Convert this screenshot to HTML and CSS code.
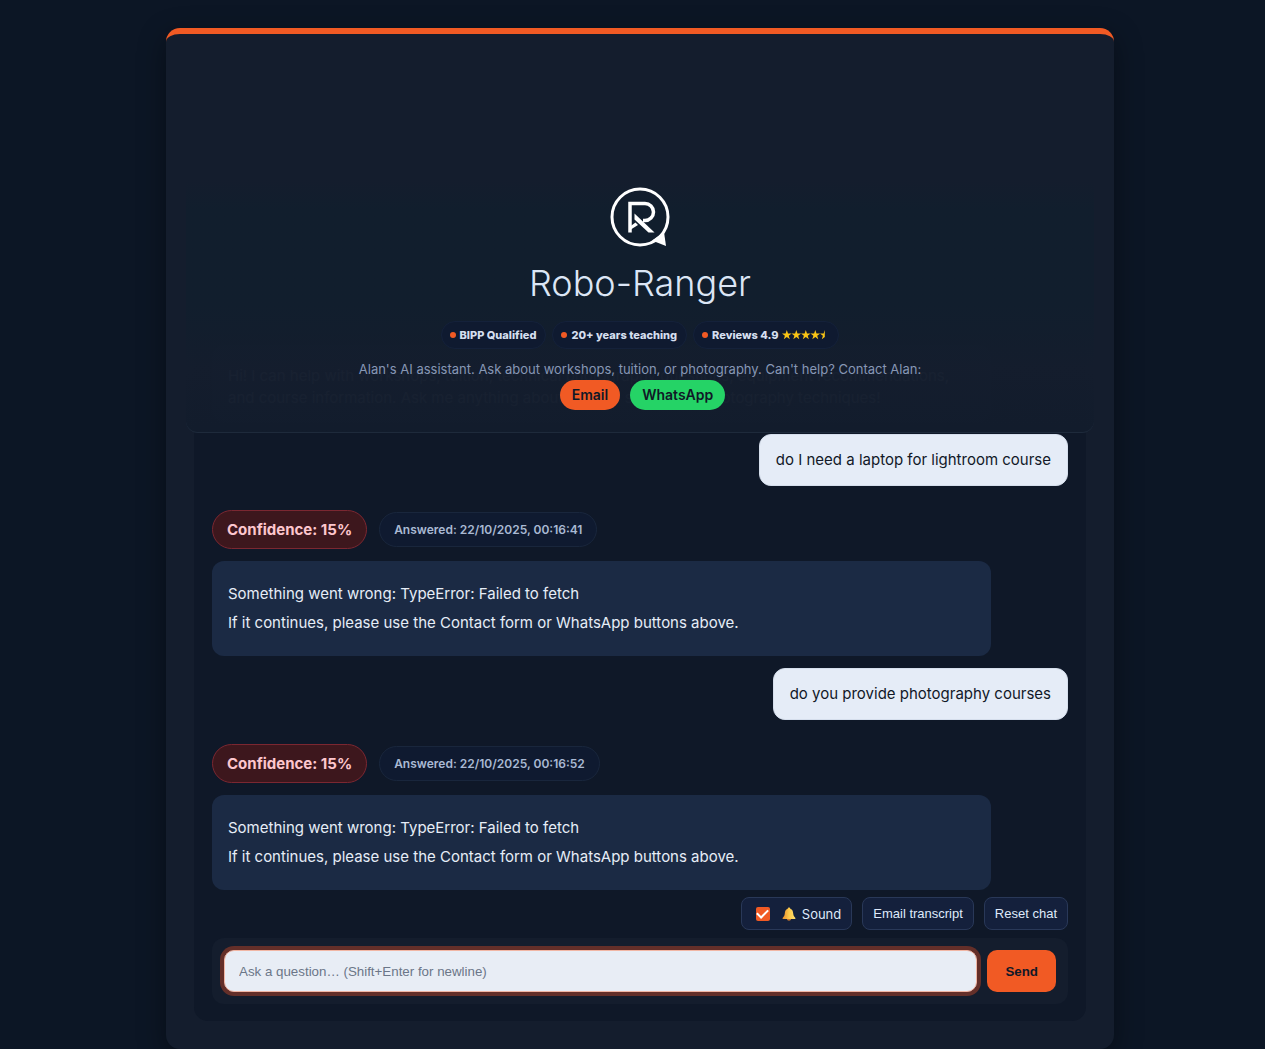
FILE: index.html
```html
<!DOCTYPE html>
<html lang="en">
<head>
<meta charset="utf-8">
<meta name="viewport" content="width=device-width, initial-scale=1">
<title>Robo-Ranger</title>
<link rel="stylesheet" href="styles.css">
</head>
<body>
<main class="card">
  <header class="hero">
    <svg class="logo" viewBox="0 0 60 60" aria-hidden="true">
      <circle cx="30" cy="30" r="28" fill="none" stroke="#fff" stroke-width="3"/>
      <path d="M42 53.500 L54 45 L56 59 Z" fill="#fff"/>
      <path d="M20 45.500V16.500H35a8.500 8.500 0 0 1 0 17H33" fill="none" stroke="#fff" stroke-width="3.500"/>
      <path d="M24.500 26.500L44.500 45.500H38.500L24.500 32.500Z" fill="#fff"/>
      <path d="M20 39.500L25.500 35.500L28 38L20 43Z" fill="#fff"/>
    </svg>
    <h1 class="title">Robo-Ranger</h1>
    <ul class="badges">
      <li class="badge">BIPP Qualified</li>
      <li class="badge">20+ years teaching</li>
      <li class="badge">Reviews 4.9
        <svg class="stars" viewBox="0 0 43 10" role="img" aria-label="Four and a half stars">
          <defs><path id="star" d="M4.800 0L6 3.500H9.600L6.700 5.700L7.800 9.200L4.800 7.100L1.800 9.200L2.900 5.700L0 3.500H3.600Z"/></defs>
          <g fill="#fac515">
            <use href="#star"/>
            <use href="#star" x="9.500"/>
            <use href="#star" x="19"/>
            <use href="#star" x="28.500"/>
            <path d="M42.800 0V7.100L39.800 9.200L40.900 5.700L38 3.500H41.600Z"/>
          </g>
        </svg>
      </li>
    </ul>
    <p class="intro">Alan's AI assistant. Ask about workshops, tuition, or photography. Can't help? Contact Alan:</p>
    <nav class="contacts">
      <a class="contact email" href="#email">Email</a>
      <a class="contact whatsapp" href="#whatsapp">WhatsApp</a>
    </nav>
  </header>

  <section class="chat">
    <div class="log">
      <p class="bot greeting">Hi! I can help with workshops, tuition, technical photography questions, equipment recommendations, and course information. Ask me anything about camera settings or photography techniques!</p>
      <p class="user">do I need a laptop for lightroom course</p>
      <div class="meta"><span class="confidence">Confidence: 15%</span><span class="answered">Answered: 22/10/2025, 00:16:41</span></div>
      <div class="bot"><p>Something went wrong: TypeError: Failed to fetch</p><p>If it continues, please use the Contact form or WhatsApp buttons above.</p></div>
      <p class="user">do you provide photography courses</p>
      <div class="meta"><span class="confidence">Confidence: 15%</span><span class="answered">Answered: 22/10/2025, 00:16:52</span></div>
      <div class="bot"><p>Something went wrong: TypeError: Failed to fetch</p><p>If it continues, please use the Contact form or WhatsApp buttons above.</p></div>
    </div>
    <div class="tools">
      <label class="tool sound" for="sound">
        <input class="check" type="checkbox" id="sound" checked>
        <svg class="bell" viewBox="0 0 14 14" aria-hidden="true">
          <defs><linearGradient id="gold"><stop offset="0" stop-color="#e98b2c"/><stop offset=".5" stop-color="#fcc94a"/><stop offset="1" stop-color="#ffdf6e"/></linearGradient></defs>
          <path d="M7 .5c.9 0 1.300.6 1.300 1.300C10.500 2.500 11 4.500 11.200 6.500c.2 2 .8 3 2 4.200.5.600.3 1.300-.5 1.300H1.300c-.8 0-1-.7-.5-1.300 1.200-1.200 1.800-2.200 2-4.200C3 4.500 3.500 2.500 5.700 1.800 5.700 1.100 6.100.5 7 .5Z" fill="url(#gold)"/>
          <path d="M5 12h4c0 1-.8 1.700-2 1.700S5 13 5 12Z" fill="#c9752b"/>
        </svg>
        Sound
      </label>
      <button class="tool" type="button">Email transcript</button>
      <button class="tool" type="button">Reset chat</button>
    </div>
    <form class="composer">
      <input class="question" type="text" aria-label="Question" placeholder="Ask a question… (Shift+Enter for newline)">
      <button class="send" type="button">Send</button>
    </form>
  </section>
</main>
</body>
</html>
```
FILE: styles.css
```css
* { box-sizing: border-box; }

body {
  margin: 0;
  padding: 28px 0 0 15px;
  background: #0c1625;
  color: #e6edf7;
  font: 15px/22px Inter, sans-serif;
}

h1, p, ul { margin: 0; padding: 0; }

.card {
  width: 76%;
  max-width: 948px;
  margin: 0 auto;
  padding: 146px 20px 28px;
  border-top: 6px solid #f15a24;
  border-radius: 14px;
  background: #141d2d;
  box-shadow: 0 8px 28px rgba(0, 0, 0, .4);
}

/* The header lies over the top of the scrolled conversation. */
.hero {
  position: relative;
  z-index: 1;
  display: flex;
  flex-direction: column;
  align-items: center;
  padding: 7px 16px 22px;
  border-bottom: 1px solid #1e2a3b;
  border-radius: 0 0 12px 12px;
  background: linear-gradient(rgba(20, 29, 45, .98), rgba(17, 30, 45, .98) 12%, rgba(17, 30, 45, .98) 50%, rgba(20, 29, 45, .98) 75%, rgba(18, 28, 44, .98));
}

.logo {
  width: 60px;
  height: 60px;
}

.title {
  margin-top: 13px;
  color: #dce6f5;
  font-size: 36px;
  font-weight: 300;
  line-height: 46px;
}

.badges {
  display: flex;
  gap: 6px;
  margin-top: 15px;
  list-style: none;
}

.badge {
  display: flex;
  align-items: center;
  gap: 4px;
  height: 28px;
  padding: 0 9px 0 8px;
  border: 1px solid #14213a;
  border-radius: 14px;
  background: #0f1a30;
  color: #d5dfef;
  font-size: 11px;
  font-weight: 800;
}

.badge::before {
  content: "";
  width: 6px;
  height: 6px;
  border-radius: 50%;
  background: #f15a24;
}

.badge:last-child { padding-right: 13px; }

.stars {
  width: 43px;
  height: 10px;
}

.intro {
  margin-top: 10px;
  color: #8797b5;
  font-size: 13px;
  line-height: 21px;
}

.contacts {
  display: flex;
  gap: 10px;
  padding-left: 5px;
}

.contact {
  padding: 0 12px;
  border-radius: 15px;
  color: #101827;
  font-size: 14px;
  font-weight: 600;
  line-height: 30px;
  text-decoration: none;
}

.email { background: #f15a24; }
.whatsapp { background: #25d366; }

.chat {
  margin: -100px 8px 0;
  padding: 12px 18px 17px;
  border-radius: 14px;
  background: #0f1828;
}

.log {
  display: flex;
  flex-direction: column;
  gap: 12px;
}

.user {
  align-self: flex-end;
  padding: 14px 16px;
  border: 1px solid #d5deec;
  border-radius: 12px;
  background: #e5ecf7;
  color: #111827;
  line-height: 22px;
}

.bot {
  width: 91%;
  padding: 18px 16px 19px;
  border-radius: 12px;
  background: #1b2a44;
  line-height: 29px;
}

.greeting {
  padding: 20px 16px 13px;
  line-height: 22px;
}

.meta {
  display: flex;
  align-items: center;
  gap: 12px;
  margin-top: 12px;
}

.confidence,
.answered {
  padding: 0 14px;
  border: 1px solid #7b2731;
  border-radius: 20px;
  background: #3d171d;
  color: #fdc6cd;
  font-weight: 700;
  line-height: 37px;
}

.answered {
  border-color: #19263c;
  background: #0f1a30;
  color: #a9b9d3;
  font-size: 12px;
  font-weight: 600;
  line-height: 33px;
}

.tools {
  display: flex;
  justify-content: flex-end;
  gap: 10px;
  margin-top: 7px;
}

.tool {
  display: flex;
  align-items: center;
  height: 33px;
  padding: 0 10px;
  border: 1px solid #293858;
  border-radius: 8px;
  background: #14203c;
  color: #dfe9fa;
  font: 13px "Liberation Sans", sans-serif;
}

.sound {
  padding-left: 14px;
  font-family: Inter, sans-serif;
}

.check {
  display: grid;
  place-items: center;
  width: 14px;
  height: 14px;
  margin: 0 12px 0 0;
  border-radius: 2px;
  appearance: none;
  background: #f15a24;
}

.check:checked::before {
  content: "";
  width: 9px;
  height: 5px;
  margin-bottom: 3px;
  border: solid #fff;
  border-width: 0 0 2px 2px;
  transform: rotate(-45deg);
}

.bell {
  width: 14px;
  height: 14px;
  margin-right: 6px;
}

.composer {
  display: flex;
  gap: 10px;
  margin-top: 8px;
  padding: 12px;
  border-radius: 12px;
  background: #141d2d;
}

.question {
  flex: 1;
  min-width: 0;
  height: 42px;
  padding: 0 14px;
  border: 1px solid #f1b6a4;
  border-radius: 10px;
  outline: none;
  background: #e8edf5;
  box-shadow: 0 0 0 4px #642f29;
  color: #111827;
  font-family: "Liberation Sans", sans-serif;
}

.question::placeholder { color: #6b7688; }

.send {
  height: 42px;
  padding: 0 18px;
  border: 0;
  border-radius: 10px;
  background: #f15a24;
  color: #101827;
  font-family: "Liberation Sans", sans-serif;
  font-weight: 700;
}
```
